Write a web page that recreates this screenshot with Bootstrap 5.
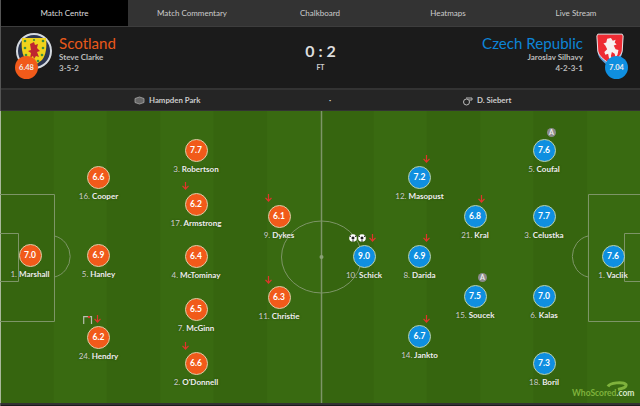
<!DOCTYPE html>
<html lang="en">
<head>
<meta charset="utf-8">
<title>Match Centre</title>
<link href="https://cdn.jsdelivr.net/npm/bootstrap@5.3.0/dist/css/bootstrap.min.css" rel="stylesheet">
<style>
html,body{width:640px;height:406px;overflow:hidden;background:#1b1b1b}
body{font-family:Lato,"Open Sans",sans-serif;font-size:8px;color:#ddd}
.stage{width:640px;height:406px;border-left:1px solid #555;display:flex;flex-direction:column}
.tabs{height:27px;background:#333;border-bottom:1px solid #3d3d3d}
.tabs a{width:128px;color:#ccc;text-decoration:none;font-size:8px;text-align:center;line-height:26px;flex:none}
.tabs a.on{background:#000;color:#ddd;width:127px}
.scorebar{height:63px;background:#1b1b1b;border-bottom:2px solid #333;padding:0 15px 0 14px;position:relative}
.crest{width:36px;height:38px;position:relative;flex:none;margin-top:6px}
.crest.cz{width:30px}
.crest svg{display:block}
.avg{position:absolute;width:23px;height:23px;border-radius:50%;color:#eee;font-size:7.5px;font-weight:700;line-height:23px;text-align:center}
.avg-h{background:#f15a1a;left:0;top:23px}
.avg-a{background:#0f8fe0;left:10px;top:23px}
.tname{font-size:15.100px;line-height:18px;margin-top:7px}
.home-c{color:#e9591a}.away-c{color:#0d84d6}
.sub1{font-size:8px;line-height:10.500px;color:#bbb;font-weight:700}
.score{position:absolute;left:0;right:0;top:12px;text-align:center}
.score b{display:block;font-size:16px;line-height:24px;color:#ddd;font-weight:700}
.score i{display:block;font-style:normal;font-weight:700;font-size:7px;line-height:7px;margin-top:1px;color:#ccc}
.infobar{height:21px;background:#252525;color:#ccc;font-size:7.800px;font-weight:700;line-height:21px;border-bottom:1px solid #333;position:relative}
.infobar>div{position:absolute;top:0;height:20px}
.pitch{position:relative;width:640px;height:292px;flex:none;margin-left:-1px;background-color:#36650f;background-image:linear-gradient(90deg,#36650f 0 53.33px,#396a11 53.33px 106.66px);background-size:106.66px 100%;overflow:hidden}
.pitch>svg.lines{position:absolute;left:0;top:0}
.pl{position:absolute;width:90px;margin-left:-45px;text-align:center;color:#eee;font-size:8px;font-weight:700;line-height:12px;text-shadow:0 0 2px #2a4d08}
.pl span{font-weight:400;color:#ccc}
.disc{width:23px;height:23px;border-radius:50%;margin:0 auto 1px;border:1px solid #d8cfa8;color:#fff;line-height:21px;font-size:8.500px;font-weight:700;text-shadow:none;display:block}
.hm .disc{background:#f15a1a}
.aw .disc{background:#0f8fe0;border-color:#bcd0a8}
.glyph{position:absolute}
.logo{position:absolute;left:572px;top:276px;font-size:8.500px;font-weight:700;line-height:12px;color:#d8e8c8;white-space:nowrap}
.logo em{font-style:normal;color:#7fb23c}
.foot{height:2px;background:#333;flex:none}
</style>
</head>
<body>
<div class="stage">
  <nav class="tabs d-flex">
    <a class="on" href="#">Match Centre</a><a href="#">Match Commentary</a><a href="#">Chalkboard</a><a href="#">Heatmaps</a><a href="#">Live Stream</a>
  </nav>

  <section class="scorebar d-flex justify-content-between">
    <div class="d-flex gap-2">
      <div class="crest">
        <svg width="38" height="38" viewBox="0 0 38 38"><circle cx="19" cy="18" r="18" fill="#d5dae0"/><circle cx="19" cy="18" r="16" fill="#2b3550"/><path d="M7 5h24c1 9 0 17-4 22l-8 6-8-6C7 22 6 14 7 5z" fill="#f0d21c"/><path d="M15 11l4-2 1 3 3-1-1 4 3 3-3 1 2 5-3-1-2 3-1-3-3 2 1-5-3-2 3-1z" fill="#bf2430"/><g fill="#3c8f3f"><circle cx="10" cy="8" r="1.300"/><circle cx="19" cy="7" r="1.100"/><circle cx="28" cy="8" r="1.300"/><circle cx="10" cy="15" r="1.300"/><circle cx="28" cy="15" r="1.300"/><circle cx="11" cy="22" r="1.300"/><circle cx="27" cy="22" r="1.300"/><circle cx="15" cy="28" r="1.300"/><circle cx="23" cy="28" r="1.300"/></g></svg>
        <div class="avg avg-h">6.48</div>
      </div>
      <div>
        <div class="tname home-c">Scotland</div>
        <div class="sub1">Steve Clarke</div>
        <div class="sub1">3-5-2</div>
      </div>
    </div>
    <div class="score"><b>0 : 2</b><i>FT</i></div>
    <div class="d-flex gap-2 text-end">
      <div class="me-1">
        <div class="tname away-c">Czech Republic</div>
        <div class="sub1">Jaroslav Silhavy</div>
        <div class="sub1">4-2-3-1</div>
      </div>
      <div class="crest cz">
        <svg width="30" height="36" viewBox="0 0 32 38"><path d="M3 3h26l1 2-1 16c-1 7-8 11-13 15C11 32 4 28 3 21L2 5z" fill="#5b9bd8"/><path d="M3 1h26l1 2-1 16c-1 6-8 10-13 14C11 29 4 25 3 19L2 3z" fill="#ee2b33" stroke="#eee" stroke-width="1"/><path d="M13 6l4-1 2 3 3-1-1 3 2 2-3 1 2 4 3 1-1 5-2 3-1-4-3-2-1 4 1 4-3-1-1-5-3 1-1-3 3-3-2-4-2-2 3-1z" fill="#f7f0f0"/></svg>
        <div class="avg avg-a">7.04</div>
      </div>
    </div>
  </section>

  <section class="infobar">
    <div style="left:133px" class="d-flex align-items-center gap-1">
      <svg width="11" height="9" viewBox="0 0 11 9"><path d="M1 2.500 5.500 1 10 2.500v4L5.500 8 1 6.500z" fill="#666" stroke="#aaa" stroke-width=".8"/></svg>Hampden Park
    </div>
    <div style="left:328px">·</div>
    <div style="left:461px" class="d-flex align-items-center gap-1">
      <svg width="11" height="11" viewBox="0 0 11 11"><circle cx="4.500" cy="7" r="3" fill="none" stroke="#bbb" stroke-width="1"/><path d="M4 3h6v2H7" fill="none" stroke="#bbb" stroke-width="1"/></svg>D. Siebert
    </div>
  </section>

  <section class="pitch">
    <svg class="lines" width="640" height="292" viewBox="0 0 640 292" fill="none" stroke="#7d9567" stroke-width="1">
      <path d="M0.500 0V292" stroke="#a9b89a"/>
      <path d="M321.500 0V292" stroke-width="1.500"/>
      <ellipse cx="321.500" cy="146" rx="40" ry="36"/>
      <circle cx="321.500" cy="146" r="2" fill="#8aa076" stroke="none"/>
      <path d="M0 83.500H54.500V210.500H0M0 122.500H18.500V170.500H0"/>
      <path d="M54.500 125A20 21 0 0 1 54.500 166"/>
      <path d="M640 83.500H588.500V210.500H640M640 122.500H624.500V170.500H640"/>
      <path d="M588 125A20 21 0 0 0 588 166"/>
    </svg>

    <div class="pl hm" style="left:30px;top:133px"><div class="disc">7.0</div><span>1.</span> Marshall</div>
    <div class="pl hm" style="left:98.500px;top:55px"><div class="disc">6.6</div><span>16.</span> Cooper</div>
    <div class="pl hm" style="left:98.500px;top:133px"><div class="disc">6.9</div><span>5.</span> Hanley</div>
    <div class="pl hm" style="left:98.500px;top:215px"><div class="disc">6.2</div><span>24.</span> Hendry</div>
    <div class="pl hm" style="left:196px;top:28px"><div class="disc">7.7</div><span>3.</span> Robertson</div>
    <div class="pl hm" style="left:196px;top:82px"><div class="disc">6.2</div><span>17.</span> Armstrong</div>
    <div class="pl hm" style="left:196px;top:134px"><div class="disc">6.4</div><span>4.</span> McTominay</div>
    <div class="pl hm" style="left:196px;top:187px"><div class="disc">6.5</div><span>7.</span> McGinn</div>
    <div class="pl hm" style="left:196px;top:241px"><div class="disc">6.6</div><span>2.</span> O'Donnell</div>
    <div class="pl hm" style="left:279px;top:94px"><div class="disc">6.1</div><span>9.</span> Dykes</div>
    <div class="pl hm" style="left:279px;top:175px"><div class="disc">6.3</div><span>11.</span> Christie</div>

    <div class="pl aw" style="left:364px;top:134px"><div class="disc">9.0</div><span>10.</span> Schick</div>
    <div class="pl aw" style="left:419.500px;top:55px"><div class="disc">7.2</div><span>12.</span> Masopust</div>
    <div class="pl aw" style="left:419.500px;top:134px"><div class="disc">6.9</div><span>8.</span> Darida</div>
    <div class="pl aw" style="left:419.500px;top:214px"><div class="disc">6.7</div><span>14.</span> Jankto</div>
    <div class="pl aw" style="left:475px;top:94px"><div class="disc">6.8</div><span>21.</span> Kral</div>
    <div class="pl aw" style="left:475px;top:174px"><div class="disc">7.5</div><span>15.</span> Soucek</div>
    <div class="pl aw" style="left:544px;top:28px"><div class="disc">7.6</div><span>5.</span> Coufal</div>
    <div class="pl aw" style="left:544px;top:94px"><div class="disc">7.7</div><span>3.</span> Celustka</div>
    <div class="pl aw" style="left:544px;top:174px"><div class="disc">7.0</div><span>6.</span> Kalas</div>
    <div class="pl aw" style="left:544px;top:241px"><div class="disc">7.3</div><span>18.</span> Boril</div>
    <div class="pl aw" style="left:613px;top:134px"><div class="disc">7.6</div><span>1.</span> Vaclik</div>

    <svg width="0" height="0" class="glyph"><defs>
      <g id="sub"><path d="M3.500 0V6M.5 3.800 3.500 7 6.500 3.800" fill="none" stroke="#e0352b" stroke-width="1.200"/></g>
      <g id="ball"><circle cx="4" cy="4" r="3.800" fill="#fff"/><circle cx="4" cy="4" r="1.500" fill="#222"/><circle cx="1.300" cy="2.200" r=".8" fill="#222"/><circle cx="6.700" cy="2.200" r=".8" fill="#222"/><circle cx="4" cy="7" r=".8" fill="#222"/></g>
      <g id="capt"><circle cx="4.500" cy="4.500" r="4.500" fill="#8b8b8b"/><text x="4.500" y="7" font-size="7" font-weight="700" text-anchor="middle" fill="#eee" font-family="Lato">A</text></g>
    </defs></svg>

    <svg class="glyph" style="left:182px;top:71px" width="8" height="8"><use href="#sub"/></svg>
    <svg class="glyph" style="left:265px;top:83px" width="8" height="8"><use href="#sub"/></svg>
    <svg class="glyph" style="left:265px;top:165px" width="8" height="8"><use href="#sub"/></svg>
    <svg class="glyph" style="left:94px;top:204px" width="8" height="8"><use href="#sub"/></svg>
    <svg class="glyph" style="left:182px;top:231px" width="8" height="8"><use href="#sub"/></svg>
    <svg class="glyph" style="left:83px;top:205px" width="10" height="8" viewBox="0 0 10 8"><path d="M.7 8V.7H8.500V8" fill="none" stroke="#b9bfb0" stroke-width="1.200"/><circle cx="6" cy="1" r="1.200" fill="#e0352b"/></svg>

    <svg class="glyph" style="left:369px;top:123px" width="8" height="8"><use href="#sub"/></svg>
    <svg class="glyph" style="left:423px;top:44px" width="8" height="8"><use href="#sub"/></svg>
    <svg class="glyph" style="left:423px;top:123px" width="8" height="8"><use href="#sub"/></svg>
    <svg class="glyph" style="left:423px;top:204px" width="8" height="8"><use href="#sub"/></svg>
    <svg class="glyph" style="left:478px;top:84px" width="8" height="8"><use href="#sub"/></svg>
    <svg class="glyph" style="left:349px;top:123px" width="8" height="8"><use href="#ball"/></svg>
    <svg class="glyph" style="left:358px;top:123px" width="8" height="8"><use href="#ball"/></svg>
    <svg class="glyph" style="left:547px;top:17px" width="9" height="9"><use href="#capt"/></svg>
    <svg class="glyph" style="left:478px;top:162px" width="9" height="9"><use href="#capt"/></svg>

    <svg class="glyph" style="left:605px;top:270px" width="24" height="13" viewBox="0 0 24 13"><path d="M3 5.500C5 1.500 18 .5 21 3.500c1 3-4 4-8 5" fill="none" stroke="#7fb23c" stroke-width="3"/></svg>
    <div class="logo"><em>WhoScored</em>.com</div>
  </section>
  <div class="foot"></div>
</div>
<script src="https://cdn.jsdelivr.net/npm/bootstrap@5.3.0/dist/js/bootstrap.bundle.min.js"></script>
</body>
</html>
